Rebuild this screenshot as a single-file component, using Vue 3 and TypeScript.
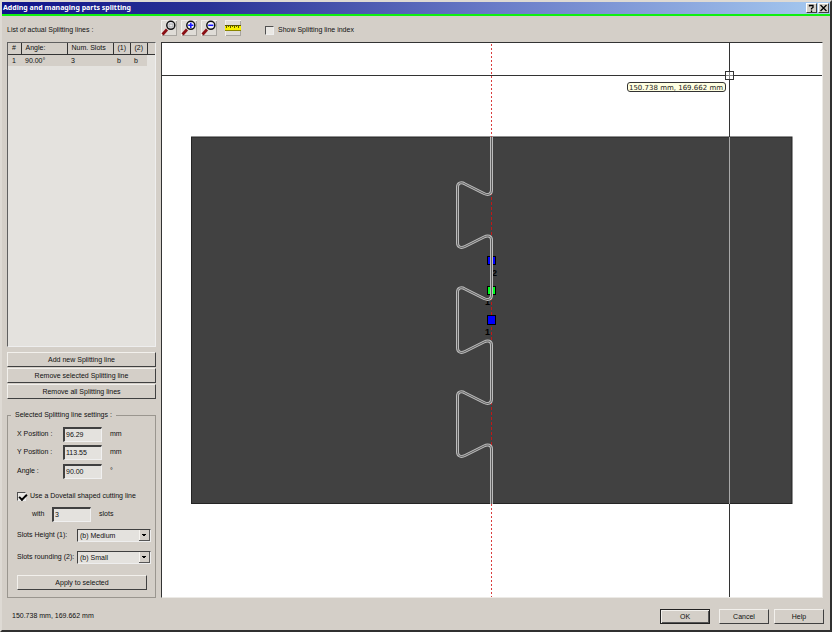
<script setup lang="ts">
import { ref } from 'vue'

interface SplitLine {
  id: number
  angle: string
  slots: number
  height: string
  rounding: string
}

const lines = ref<SplitLine[]>([{ id: 1, angle: '90.00°', slots: 3, height: 'b', rounding: 'b' }])
const showIndex = ref(false)
const dovetail = ref(true)
const xPos = ref('96.29')
const yPos = ref('113.55')
const angle = ref('90.00')
const slotCount = ref('3')
const slotHeight = ref('(b) Medium')
const slotRounding = ref('(b) Small')
const cursorText = '150.738 mm, 169.662 mm'

// One dovetail slot, shifted down by dy
function slotPath(dy: number): string {
  const y = (n: number) => n + dy
  return [
    `V${y(190)}`,
    `C491.5 ${y(194.5)} 488 ${y(195.5)} 484 ${y(193.5)}`,
    `L465 ${y(184)}`,
    `C461 ${y(181.5)} 457.5 ${y(183)} 457.5 ${y(187)}`,
    `V${y(243)}`,
    `C457.5 ${y(247)} 461 ${y(248.5)} 465 ${y(246.5)}`,
    `L484 ${y(237)}`,
    `C488 ${y(235)} 491.5 ${y(236)} 491.5 ${y(240)}`,
  ].join(' ')
}
const cutPath = `M491.5 137 ${[0, 105, 209].map(slotPath).join(' ')} V504`
</script>

<template>
  <main class="window">
    <header class="titlebar">
      <h1>Adding and managing parts splitting</h1>
      <button type="button" class="cap" aria-label="Help">
        <svg viewBox="0 0 9 8"><path d="M2.5 2.5V1.5H6V3.5L4.5 4.5V5.5M4.5 6.5V8" /></svg>
      </button>
      <button type="button" class="cap" aria-label="Close">
        <svg viewBox="0 0 9 8"><path d="M1.5 1L7.5 7M7.5 1L1.5 7" /></svg>
      </button>
    </header>

    <div class="body">
      <aside class="side">
        <p class="caption">List of actual Splitting lines :</p>
        <div class="list">
          <table>
            <thead>
              <tr><th class="c-id">#</th><th class="c-angle">Angle:</th><th class="c-slots">Num. Slots</th><th class="c-opt">(1)</th><th class="c-opt">(2)</th><th></th></tr>
            </thead>
            <tbody>
              <tr v-for="l in lines" :key="l.id">
                <td>{{ l.id }}</td><td>{{ l.angle }}</td><td>{{ l.slots }}</td><td>{{ l.height }}</td><td>{{ l.rounding }}</td><td class="rest"></td>
              </tr>
            </tbody>
          </table>
        </div>
        <div class="stack">
          <button type="button" class="btn">Add new Splitting line</button>
          <button type="button" class="btn">Remove selected Splitting line</button>
          <button type="button" class="btn">Remove all Splitting lines</button>
        </div>
        <fieldset class="settings">
          <legend>Selected Splitting line settings :</legend>
          <div class="field"><label for="xp">X Position :</label><input id="xp" v-model="xPos" type="text" /><span>mm</span></div>
          <div class="field"><label for="yp">Y Position :</label><input id="yp" v-model="yPos" type="text" /><span>mm</span></div>
          <div class="field angle"><label for="an">Angle :</label><input id="an" v-model="angle" type="text" /><span>°</span></div>
          <label class="check"><input v-model="dovetail" type="checkbox" />Use a Dovetail shaped cutting line</label>
          <div class="field with"><label for="sc">with</label><input id="sc" v-model="slotCount" type="text" /><span>slots</span></div>
          <div class="choice">
            <label for="sh">Slots Height (1):</label>
            <select id="sh" v-model="slotHeight"><option>(a) Small</option><option>(b) Medium</option><option>(c) Large</option></select>
          </div>
          <div class="choice">
            <label for="sr">Slots rounding (2):</label>
            <select id="sr" v-model="slotRounding"><option>(a) None</option><option>(b) Small</option><option>(c) Large</option></select>
          </div>
          <button type="button" class="btn apply">Apply to selected</button>
        </fieldset>
      </aside>

      <section class="view">
        <div class="tools">
          <button v-for="kind in ['window', 'in', 'out']" :key="kind" type="button" class="tool" :aria-label="'Zoom ' + kind">
            <svg viewBox="0 0 16 16">
              <path d="M1.5 14.5L6 9.5" stroke="#8a0f14" stroke-width="2.8" />
              <circle cx="9.8" cy="5.3" r="4" fill="#f0f0f6" stroke="#111" stroke-width="1.5" />
              <rect v-if="kind === 'window'" x="8" y="4" width="4" height="3" fill="#e8e8e8" stroke="#aaa" stroke-width="1" />
              <path v-else-if="kind === 'in'" d="M7.2 5.3H12.4M9.8 2.7V7.9" stroke="#1414ff" stroke-width="1.5" />
              <path v-else d="M7.2 5.3H12.4" stroke="#1414ff" stroke-width="1.5" />
            </svg>
          </button>
          <button type="button" class="tool ruler" aria-label="Measure">
            <svg viewBox="0 0 16 16">
              <rect x="0" y="6" width="16" height="5" fill="#f8f000" />
              <path d="M0 5.5H16M1.5 6V8M3.5 6V7M5.5 6V8M7.5 6V7M9.5 6V8M11.5 6V7M13.5 6V8" stroke="#5a5600" />
              <path d="M0 10.5H16" stroke="#8a8600" />
            </svg>
          </button>
          <label class="check index"><input v-model="showIndex" type="checkbox" />Show Splitting line index</label>
        </div>
        <div class="canvas">
          <svg viewBox="162 43 660 554" preserveAspectRatio="xMidYMin meet">
            <rect x="191.5" y="137" width="600.5" height="366.5" fill="#414141" stroke="#242424" />
            <path d="M491.5 44V137M491.5 504V597" stroke="#d83c3c" stroke-dasharray="2 2" />
            <path d="M491.5 137V504" stroke="#c01818" stroke-dasharray="3 2" />
            <g stroke="#000">
              <rect x="487.5" y="256.5" width="8" height="8" fill="#0000ff" />
              <rect x="487.5" y="286.5" width="8" height="8" fill="#00ff20" />
              <rect x="487.5" y="315.5" width="8" height="9" fill="#0000ff" />
            </g>
            <g class="mark">
              <text x="492" y="276">2</text>
              <text x="485" y="305">1</text>
              <text x="485" y="335">1</text>
            </g>
            <path :d="cutPath" fill="none" stroke="#bcbcbc" stroke-width="3" />
            <path :d="cutPath" fill="none" stroke="#5c5c5c" stroke-width="1" />
            <path d="M162 75.5H822M729.5 43V137M729.5 504V597" stroke="#333" />
            <path d="M729.5 137V504" stroke="#a8a8a8" />
            <rect x="725.5" y="71.5" width="8" height="8" fill="#fff" stroke="#333" />
            <path d="M726 75.5H733M729.5 72V79" stroke="#888" />
            <rect x="627.5" y="82.5" width="98" height="9" rx="2.5" fill="#ffffe1" stroke="#333" />
            <text class="tip" x="676" y="90">{{ cursorText }}</text>
          </svg>
        </div>
      </section>
    </div>

    <footer class="footer">
      <output>{{ cursorText }}</output>
      <button type="button" class="btn ok">OK</button>
      <button type="button" class="btn">Cancel</button>
      <button type="button" class="btn">Help</button>
    </footer>
  </main>
</template>

<style>
body { margin: 0; background: #d4d0c8; }
</style>

<style scoped>
* { box-sizing: border-box; }
.window {
  display: flex; flex-direction: column; min-height: 100vh;
  border: 2px solid; border-color: #dedad4 #303030 #303030 #dedad4;
  background: #d4cfc8; color: #101010;
  font: 7px/12px "Liberation Sans", Arial, sans-serif;
  white-space: nowrap;
}
button, input, select { font: inherit; color: inherit; margin: 0; }
.titlebar {
  display: flex; align-items: center; height: 14px; padding-right: 1px;
  background: linear-gradient(90deg, #10148a, #2a3296 25%, #6a7cc8 60%, #a6caf0);
  border-bottom: 2px solid #10f010;
}
h1 { flex: 1; margin: 0 0 0 1px; color: #fff; font: bold 7px/12px "Noto Sans", "DejaVu Sans", sans-serif; }
.cap {
  width: 11px; height: 10px; padding: 0; display: flex; margin-left: 1px;
  background: #d4d0c8; border: 1px solid; border-color: #fff #404040 #404040 #fff;
}
.cap svg { width: 9px; height: 8px; fill: none; stroke: #000; stroke-width: 1.3; }
.body { display: flex; flex: 1; gap: 5px; padding: 3px 7px 0 5px; }
.side { width: 149px; flex: none; display: flex; flex-direction: column; }
.caption { margin: 5px 0 6px; height: 12px; }
.list { flex: 1; border: 1px solid; border-color: #606060 #eee #eee #606060; background: #e4e2de; }
table { width: 100%; border-collapse: collapse; table-layout: fixed; }
th { height: 11px; padding: 0 0 0 4px; font-weight: normal; text-align: left; line-height: 10px; border-right: 1px solid #333; border-bottom: 1px solid #333; background: #d4cfc8; }
td { height: 11px; padding: 0 0 0 4px; line-height: 11px; background: #d4cfc8; }
th:last-child { border-right: 0; }
td.rest { background: none; }
.c-id { width: 13px; }
.c-angle { width: 46px; }
.c-slots { width: 46px; }
.c-opt { width: 17px; }
.stack { display: flex; flex-direction: column; gap: 1px; margin-top: 5px; }
.btn {
  height: 15px; padding: 0; line-height: 11px; text-align: center;
  background: #d4cfc8; border: 1px solid; border-color: #f2f0ec #404040 #404040 #f2f0ec;
}
.settings { margin: 10px 0 0; padding: 4px 4px 7px 9px; min-width: 0; border: 1px solid #9a968f; display: flex; flex-direction: column; }
legend { margin-left: -6px; padding: 0 4px; }
.field { display: flex; align-items: center; height: 18px; }
.field label { width: 46px; }
.field input {
  width: 39px; height: 15px; padding: 0 0 0 1px; background: #e4e2de;
  border: 1px solid; border-color: #404040 #f0f0f0 #f0f0f0 #404040; border-width: 2px 1px 1px 2px;
}
.field span { margin-left: 8px; }
.angle { height: 20px; }
.check { display: flex; align-items: center; gap: 4px; margin: 9px 0 3px; }
.check input {
  appearance: none; width: 9px; height: 9px; background: #eae8e4;
  border: 1px solid; border-color: #505050 #eee #eee #505050; display: grid;
}
.check input:checked::after {
  content: ""; width: 6px; height: 3px; margin: 1px 0 0 1px;
  border: solid #000; border-width: 0 0 2px 2px; transform: rotate(-45deg);
}
.with { padding-left: 15px; margin-bottom: 1px; }
.with label { width: 20px; }
.choice { display: flex; align-items: center; justify-content: space-between; height: 22px; }
.choice select {
  appearance: none; width: 74px; height: 13px; padding: 0 0 0 2px;
  border: 1px solid; border-color: #404040 #eee #eee #404040; border-radius: 0;
  background:
    conic-gradient(from -45deg at 50% 100%, #000 90deg, transparent 0) right 3px top 4px / 6px 3px no-repeat,
    linear-gradient(#555, #555) right bottom / 11px 1px no-repeat,
    linear-gradient(#555, #555) right / 1px 100% no-repeat,
    linear-gradient(#d4cfc8, #d4cfc8) right / 10px 100% no-repeat,
    linear-gradient(#f6f4f0, #f6f4f0) right / 11px 100% no-repeat,
    #e4e2de;
}
.apply { margin: 7px 4px 0 0; }
.view { flex: 1; min-width: 0; display: flex; flex-direction: column; }
.tools { display: flex; height: 23px; padding-top: 1px; gap: 4px; }
.tool { width: 16px; height: 16px; padding: 0; border: 0; box-shadow: inset 1px 1px #f0eeea, inset -1px -1px #a8a5a0; background: #dfdcd7; display: flex; }
.tool svg { width: 16px; height: 16px; fill: none; }
.ruler { margin-left: 4px; }
.index { margin: 0 0 0 20px; height: 20px; }
.canvas { flex: 1; border: 1px solid; border-color: #333 #eceae6 #eceae6 #333; background: #fff; display: flex; min-height: 0; }
.canvas svg { display: block; width: 100%; height: auto; }
.mark { font: bold 9px "Liberation Sans", sans-serif; fill: #000; }
.tip { font: 7px "DejaVu Sans", sans-serif; fill: #222; text-anchor: middle; }
.footer { display: flex; align-items: center; height: 32px; padding: 4px 6px 0 10px; gap: 5px; }
.footer output { flex: 1; }
.footer .btn { width: 50px; }
.footer .ok { margin-right: 4px; border: 1px solid #222; box-shadow: inset 1px 1px #f2f0ec, inset -1px -1px #555; }
</style>
